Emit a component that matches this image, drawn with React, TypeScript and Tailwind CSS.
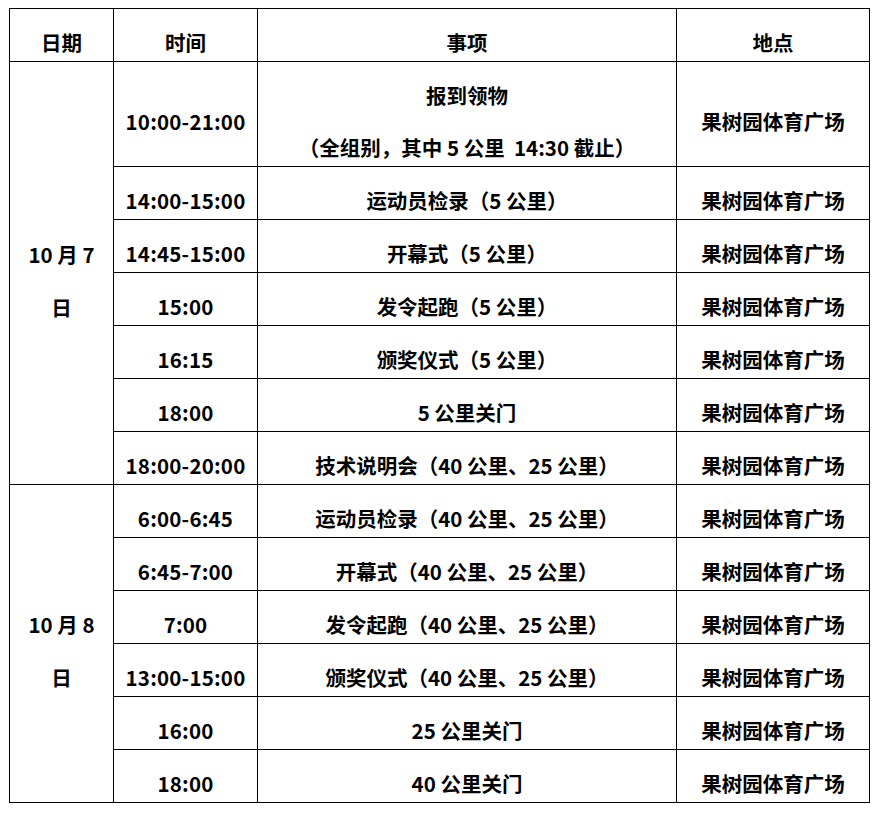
import React from "react";

const group1: [string, string][] = [
  ["14:00-15:00", "运动员检录（5 公里）"],
  ["14:45-15:00", "开幕式（5 公里）"],
  ["15:00", "发令起跑（5 公里）"],
  ["16:15", "颁奖仪式（5 公里）"],
  ["18:00", "5 公里关门"],
  ["18:00-20:00", "技术说明会（40 公里、25 公里）"],
];

const group2: [string, string][] = [
  ["6:45-7:00", "开幕式（40 公里、25 公里）"],
  ["7:00", "发令起跑（40 公里、25 公里）"],
  ["13:00-15:00", "颁奖仪式（40 公里、25 公里）"],
  ["16:00", "25 公里关门"],
  ["18:00", "40 公里关门"],
];

const PLACE = "果树园体育广场";

function Cell({ children, className = "" }: { children: React.ReactNode; className?: string }) {
  return (
    <div
      className={
        "border-r border-b border-black flex flex-col items-center justify-center pt-[14px] text-center whitespace-pre " +
        className
      }
    >
      {children}
    </div>
  );
}

export default function App() {
  return (
    <div className="bg-white w-[877px] h-[813px] pt-[8px] pl-[9px] font-['Noto_Sans_CJK_SC','Noto_Sans',sans-serif] font-bold text-[20.5px] leading-[26px] text-black">
      <div className="grid grid-cols-[104px_144px_419px_193px] grid-rows-[53px_105px_repeat(12,53px)] border-l border-t border-black w-[861px]">
        <Cell>日期</Cell>
        <Cell>时间</Cell>
        <Cell>事项</Cell>
        <Cell>地点</Cell>

        <Cell className="row-span-7 gap-[27px]">
          <span>10 月 7</span>
          <span>日</span>
        </Cell>
        <Cell className="tracking-[0.2px]">10:00-21:00</Cell>
        <Cell className="gap-[26px]">
          <span>报到领物</span>
          <span>（全组别，其中 5 公里  14:30 截止）</span>
        </Cell>
        <Cell>{PLACE}</Cell>
        {group1.map(([t, e], i) => (
          <React.Fragment key={"a" + i}>
            <Cell className="tracking-[0.2px]">{t}</Cell>
            <Cell>{e}</Cell>
            <Cell>{PLACE}</Cell>
          </React.Fragment>
        ))}

        <Cell className="row-span-6 gap-[27px]">
          <span>10 月 8</span>
          <span>日</span>
        </Cell>
        <Cell className="tracking-[0.2px]">6:00-6:45</Cell>
        <Cell>运动员检录（40 公里、25 公里）</Cell>
        <Cell>{PLACE}</Cell>
        {group2.map(([t, e], i) => (
          <React.Fragment key={"b" + i}>
            <Cell className="tracking-[0.2px]">{t}</Cell>
            <Cell>{e}</Cell>
            <Cell>{PLACE}</Cell>
          </React.Fragment>
        ))}
      </div>
    </div>
  );
}
